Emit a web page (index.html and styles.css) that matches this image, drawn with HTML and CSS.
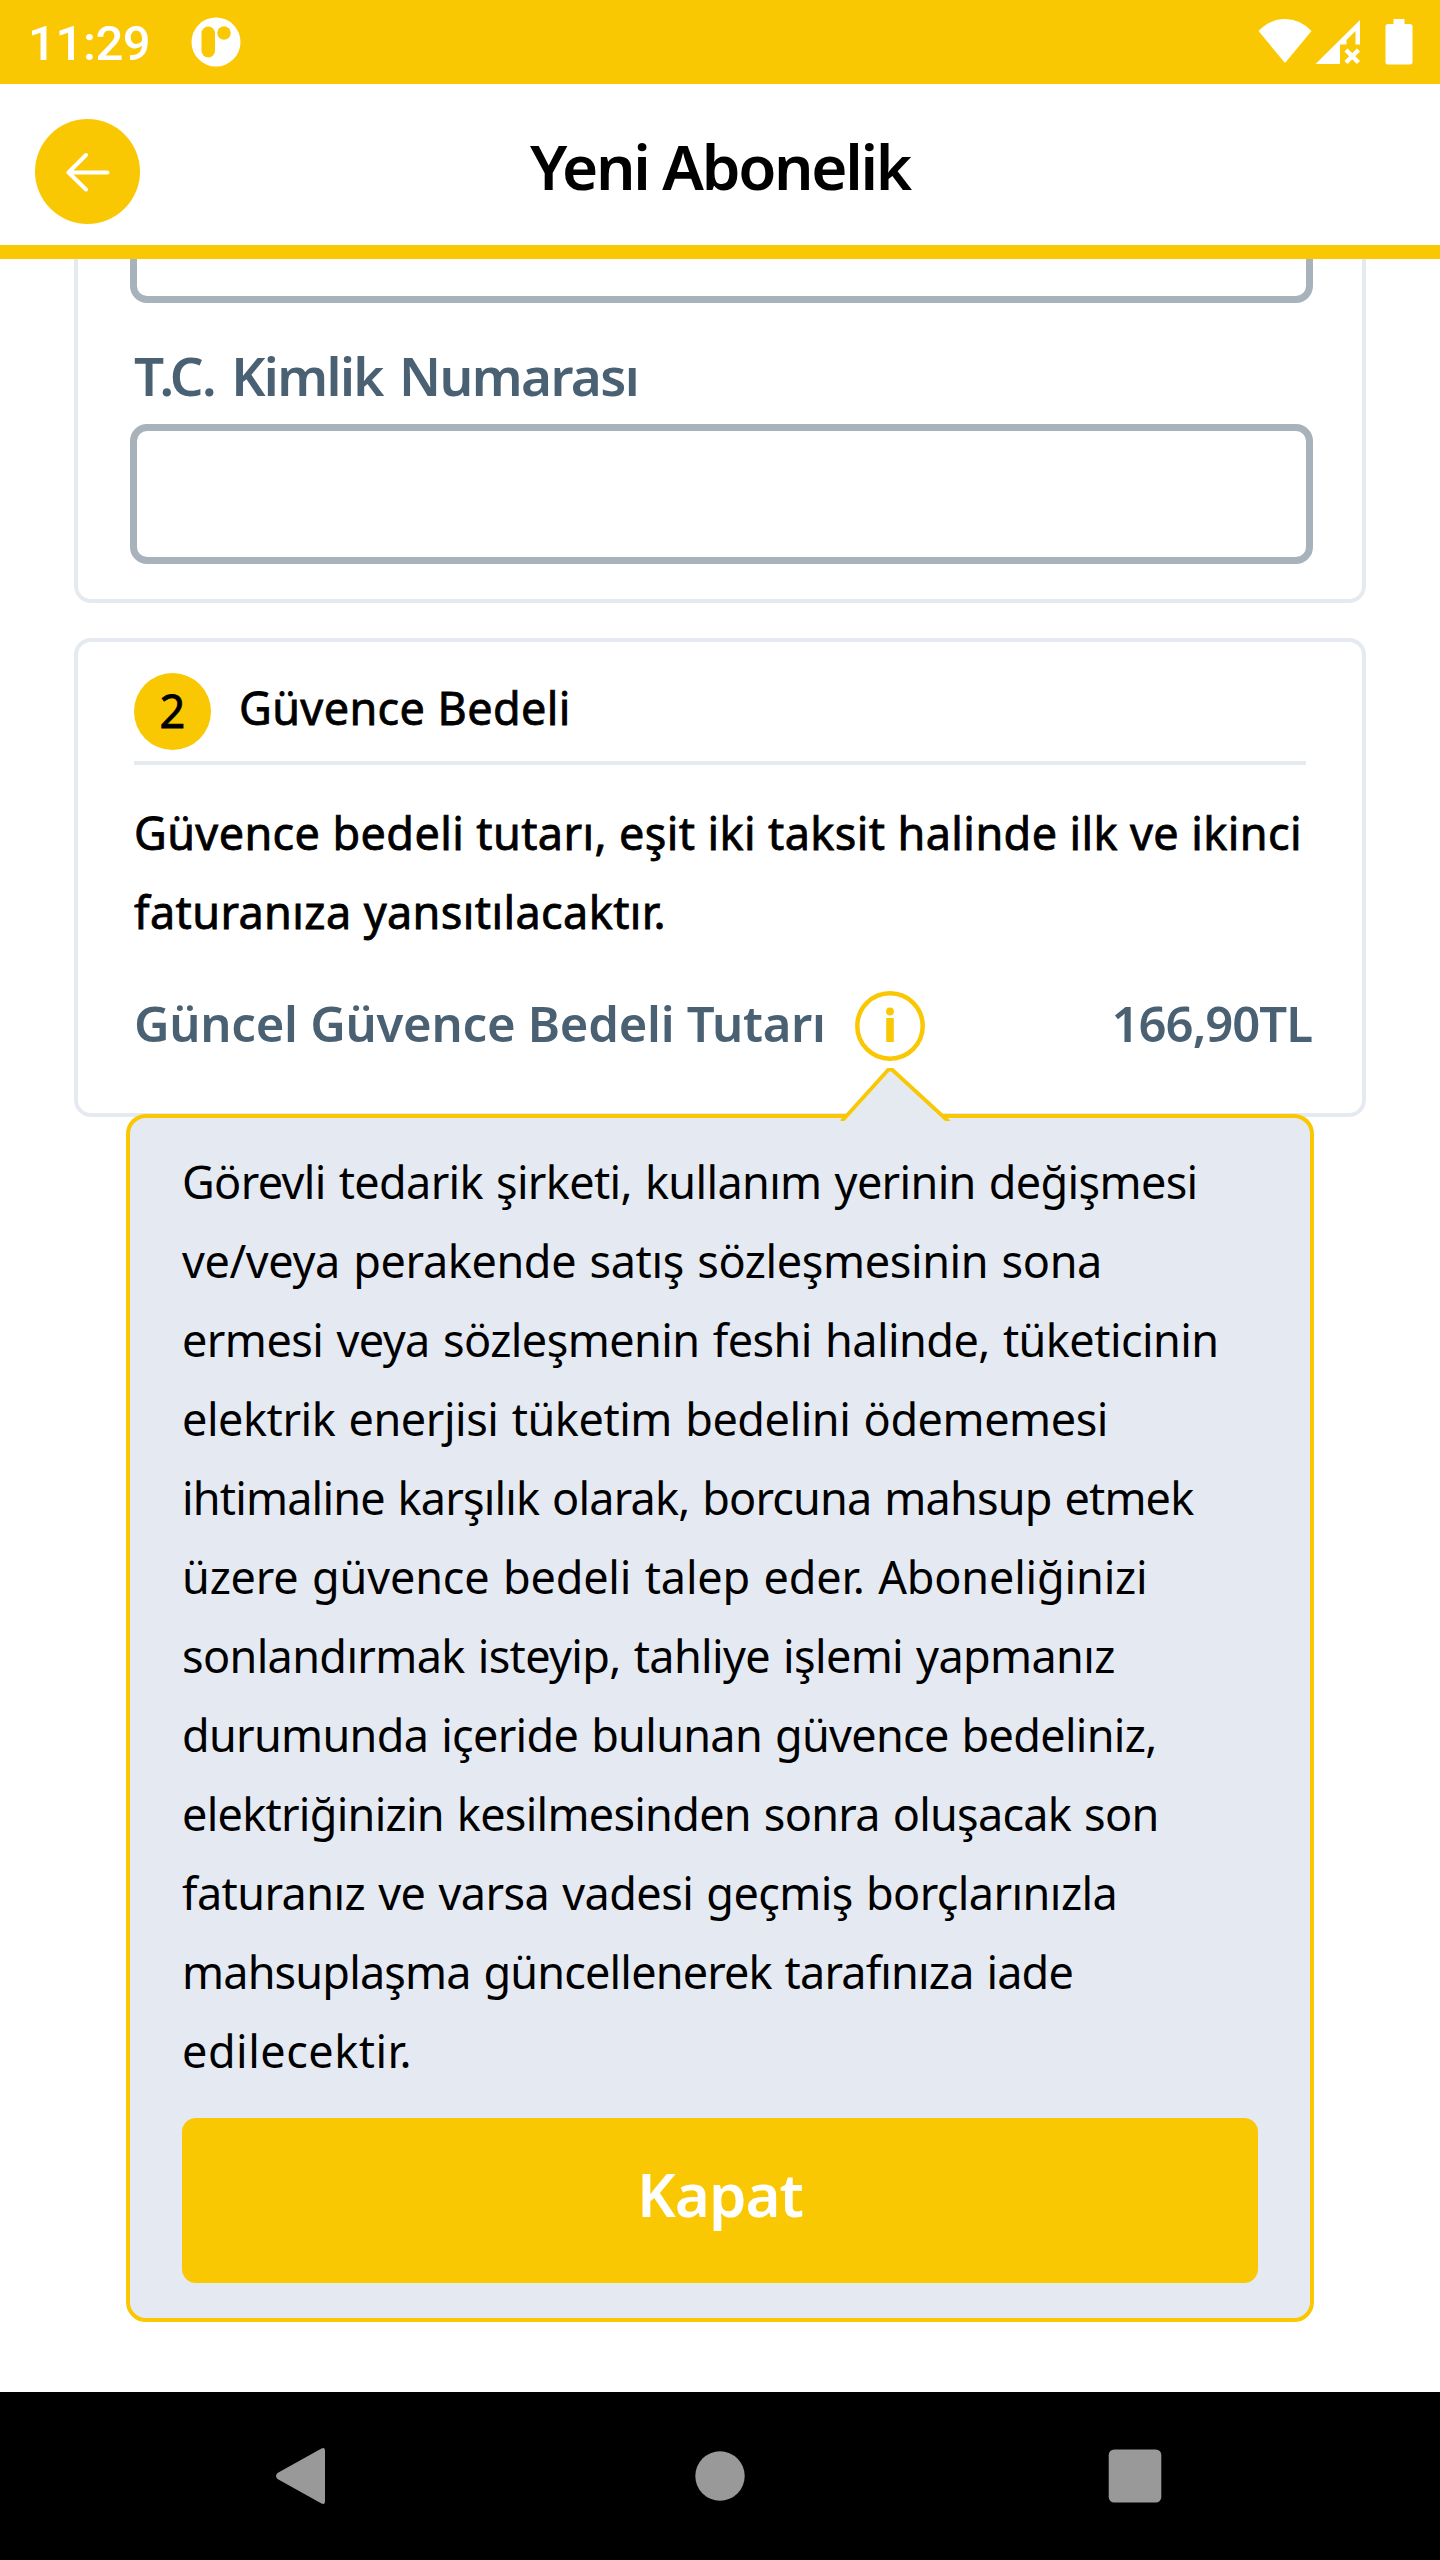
FILE: index.html
```html
<!DOCTYPE html>
<html lang="tr">
<head>
<meta charset="utf-8">
<title>Yeni Abonelik</title>
<link rel="stylesheet" href="styles.css">
</head>
<body>
<div class="status">
  <span class="clock">11:29</span>
  <svg class="app-icon" width="50" height="50" viewBox="0 0 50 50"><circle cx="25" cy="25" r="24.5" fill="#fff"/><rect x="10.5" y="9.5" width="13.5" height="31" rx="6.7" fill="#f9c803"/><circle cx="33" cy="16" r="6.7" fill="#f9c803"/></svg>
  <svg class="wifi" width="54" height="46" viewBox="0 0 54 46"><path d="M27 45 L.5 13 Q12 1 27 1 T53.500 13Z" fill="#fff"/></svg>
  <svg class="signal" width="46" height="46" viewBox="0 0 46 46"><path fill="#fff" fill-rule="evenodd" d="M45 1V25.500H40.500V12L31.500 21V25.500H25V45H.5Z"/><path d="M31 31l12.500 12.500M43.500 31L31 43.500" stroke="#fff" stroke-width="4.500"/></svg>
  <svg class="battery" width="28" height="46" viewBox="0 0 28 46"><path fill="#fff" d="M8.500 0h11v5H25q2.500 0 2.500 2.500V43q0 2.500-2.500 2.500H3Q.5 45.500.5 43V7.500Q.5 5 3 5h5.500Z"/></svg>
</div>
<header class="header">
  <button class="back" aria-label="Geri"><svg width="44" height="40" viewBox="0 0 44 40"><path d="M20 3L2.500 20.500L20 37.500M3 20.500H41.500" fill="none" stroke="#fff" stroke-width="4" stroke-linecap="round" stroke-linejoin="round"/></svg></button>
  <h1 class="title">Yeni Abonelik</h1>
</header>
<main class="content">
  <section class="card card-identity">
    <div class="field field-cut"></div>
    <div class="label">T.C. Kimlik Numarası</div>
    <div class="field"></div>
  </section>
  <section class="card card-deposit">
    <div class="step">
      <span class="badge">2</span>
      <span class="step-name">Güvence Bedeli</span>
    </div>
    <p class="note">Güvence bedeli tutarı, eşit iki taksit halinde ilk ve ikinci<br>faturanıza yansıtılacaktır.</p>
    <div class="amount">
      <span class="amount-name">Güncel Güvence Bedeli Tutarı</span>
      <svg class="info" width="70" height="70" viewBox="0 0 70 70"><circle cx="35" cy="35" r="32.700" fill="none" stroke="#f9c803" stroke-width="4.500"/><circle cx="35" cy="20.500" r="3.900" fill="#f9c803"/><path d="M31.200 27h7.600v24h-7.600z" fill="#f9c803"/></svg>
      <span class="amount-value">166,90TL</span>
    </div>
  </section>
  <aside class="tooltip">
    <svg class="pointer" width="118" height="53" viewBox="0 0 118 53"><path d="M8 53L54 1H58L114 53Z" fill="#e5eaf1"/><path d="M7.500 53.500L54.500 1.500H58L115 54" fill="none" stroke="#f9c803" stroke-width="3.800"/></svg>
    <p class="tooltip-text">
      <span>Görevli tedarik şirketi, kullanım yerinin değişmesi</span>
      <span>ve/veya perakende satış sözleşmesinin sona</span>
      <span>ermesi veya sözleşmenin feshi halinde, tüketicinin</span>
      <span>elektrik enerjisi tüketim bedelini ödememesi</span>
      <span>ihtimaline karşılık olarak, borcuna mahsup etmek</span>
      <span>üzere güvence bedeli talep eder. Aboneliğinizi</span>
      <span>sonlandırmak isteyip, tahliye işlemi yapmanız</span>
      <span>durumunda içeride bulunan güvence bedeliniz,</span>
      <span>elektriğinizin kesilmesinden sonra oluşacak son</span>
      <span>faturanız ve varsa vadesi geçmiş borçlarınızla</span>
      <span>mahsuplaşma güncellenerek tarafınıza iade</span>
      <span>edilecektir.</span>
    </p>
    <button class="close">Kapat</button>
  </aside>
</main>
<nav class="navbar">
  <svg width="52" height="58" viewBox="0 0 52 58"><path d="M46.500 1.500Q50 0 50 4V54Q50 58 46.500 56.500L2.500 32Q-.5 29 2.500 26Z" fill="#999"/></svg>
  <svg class="home" width="50" height="50" viewBox="0 0 50 50"><circle cx="25" cy="25" r="24.700" fill="#999"/></svg>
  <svg width="54" height="54" viewBox="0 0 54 54"><rect x=".7" y=".5" width="52.600" height="53" rx="5.500" fill="#999"/></svg>
</nav>
</body>
</html>
```
FILE: styles.css
```css
* { box-sizing: border-box; }

body {
  margin: 0;
  width: 1440px;
  height: 2560px;
  display: flex;
  flex-direction: column;
  overflow: hidden;
  background: #fff;
  color: #000;
  font-family: "Noto Sans", "Open Sans", sans-serif;
  font-size: 45px;
}

h1, p { margin: 0; }

button {
  border: 0;
  padding: 0;
  font-family: inherit;
}

.status {
  height: 84px;
  flex: none;
  display: flex;
  align-items: center;
  padding: 0 27px 0 28px;
  background: #f9c803;
}

.clock {
  width: 163px;
  color: #fff;
  font: 500 49px/86px Roboto, sans-serif;
  letter-spacing: -0.4px;
  padding-top: 3px;
}

.wifi { margin-left: auto; margin-top: -2px; }
.signal { margin-left: 3px; margin-top: -1px; }
.battery { margin-left: 24px; }

.header {
  height: 175px;
  flex: none;
  display: grid;
  grid-template-columns: 105px 1fr 105px;
  padding: 35px 35px 0;
  border-bottom: 14px solid #f9c803;
}

.back {
  width: 105px;
  height: 105px;
  display: flex;
  align-items: center;
  justify-content: center;
  border-radius: 50%;
  background: #f9c803;
}

.title {
  font-size: 62px;
  font-weight: 600;
  line-height: 94px;
  letter-spacing: -2.3px;
  text-align: center;
}

.content {
  height: 2133px;
  flex: none;
  padding: 0 74px;
}

.card {
  border: 4px solid #e5eaf1;
  border-radius: 17px;
}

.card-identity {
  padding: 0 49px 35px 52px;
  border-top: 0;
  border-radius: 0 0 17px 17px;
}

.field {
  height: 140px;
  border: 7px solid #a8b2bb;
  border-radius: 17px;
}

.field-cut {
  height: 44px;
  border-top: 0;
  border-radius: 0 0 17px 17px;
}

.label {
  height: 121px;
  padding: 24px 0 0 4px;
  color: #4a6073;
  font-size: 53px;
  font-weight: 600;
  line-height: 97px;
  letter-spacing: -1.6px;
  word-spacing: 4px;
}

.card-deposit {
  height: 479px;
  margin-top: 35px;
  padding: 31px 49px 0 56px;
}

.step {
  display: flex;
  gap: 28px;
  width: 1172px;
  height: 92px;
  border-bottom: 4px solid #e5ebef;
}

.badge,
.step-name,
.note {
  letter-spacing: 0.4px;
  -webkit-text-stroke: 0.8px #000;
}

.badge {
  width: 77px;
  height: 77px;
  border-radius: 50%;
  background: #f9c803;
  line-height: 75px;
  text-align: center;
}

.step-name { line-height: 70px; }

.note {
  margin-top: 28px;
  line-height: 79px;
  white-space: nowrap;
}

.amount {
  display: flex;
  margin-top: 40px;
  color: #4a6073;
  font-size: 49px;
  font-weight: 600;
  line-height: 64px;
  letter-spacing: -0.25px;
  white-space: nowrap;
}

.amount-name { width: 721px; }

.amount-value {
  margin-left: auto;
  margin-right: 1px;
  letter-spacing: -1px;
}

.tooltip {
  position: relative;
  height: 1208px;
  margin: -3px 52px 0;
  padding: 24px 52px 0;
  border: 4px solid #f9c803;
  border-radius: 20px;
  background: #e5eaf2;
}

.pointer {
  position: absolute;
  left: 704px;
  top: -50px;
}

.tooltip-text {
  line-height: 79px;
  white-space: nowrap;
  word-spacing: 2px;
}

.tooltip-text span {
  display: block;
  letter-spacing: -0.65px;
}

.tooltip-text span:nth-child(2) { letter-spacing: -0.37px; }
.tooltip-text span:nth-child(3) { letter-spacing: -0.55px; }
.tooltip-text span:nth-child(4) { letter-spacing: -0.45px; }
.tooltip-text span:nth-child(5) { letter-spacing: -0.83px; }
.tooltip-text span:nth-child(6) { letter-spacing: -0.17px; }
.tooltip-text span:nth-child(8) { letter-spacing: -0.7px; }
.tooltip-text span:nth-child(9) { letter-spacing: -0.73px; }
.tooltip-text span:nth-child(10) { letter-spacing: -0.57px; }
.tooltip-text span:nth-child(11) { letter-spacing: -0.84px; }
.tooltip-text span:nth-child(12) { letter-spacing: 0.5px; }

.close {
  display: block;
  width: 100%;
  height: 165px;
  margin-top: 28px;
  padding-bottom: 12px;
  border-radius: 14px;
  background: #f9c803;
  color: #fff;
  font-size: 60px;
  font-weight: 600;
  line-height: 153px;
  letter-spacing: -1px;
}

.navbar {
  height: 168px;
  flex: none;
  display: flex;
  align-items: center;
  justify-content: space-between;
  padding: 0 278px 0 275px;
  background: #000;
}

.home { margin-left: 5px; }
```
